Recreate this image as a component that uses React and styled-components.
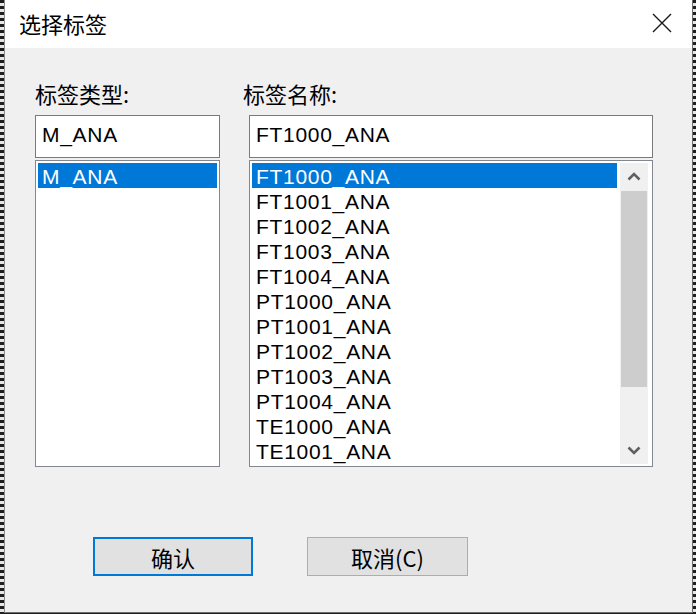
import React from "react";
import styled, { createGlobalStyle } from "styled-components";

const GlobalStyle = createGlobalStyle`
  * {
    box-sizing: border-box;
  }
  body {
    margin: 0;
    background: #f0f0f0;
  }
`;

const CJK = `"Noto Sans CJK SC", "Liberation Sans", sans-serif`;
const LATIN = `"Liberation Sans", "Noto Sans CJK SC", sans-serif`;

const Frame = styled.div`
  width: 696px;
  height: 614px;
  display: flex;
  padding: 0 3px 1px 4px;
  background: repeating-linear-gradient(
    to bottom,
    #1e1e1e 0 3px,
    #e6e6e6 3px 6px
  );
  overflow: hidden;
`;

const Window = styled.div`
  flex: 1;
  display: flex;
  flex-direction: column;
  background: #f0f0f0;
  border-left: 1px solid #8c8c8c;
  border-right: 1px solid #6e6e6e;
  border-bottom: 1px solid #6e6e6e;
`;

const TitleBar = styled.div`
  height: 48px;
  flex-shrink: 0;
  display: flex;
  align-items: center;
  justify-content: space-between;
  background: #ffffff;
  padding: 0 20px 2px 14px;
`;

const Title = styled.span`
  font-family: ${CJK};
  font-size: 22px;
  color: #000000;
`;

const CloseButton = styled.div`
  width: 20px;
  height: 20px;
  display: flex;
  align-items: center;
  justify-content: center;
`;

const Body = styled.div`
  flex: 1;
  display: flex;
  flex-direction: column;
  padding: 32px 0 0 30px;
`;

const Columns = styled.div`
  display: flex;
  gap: 29px;
`;

const Column = styled.div`
  width: ${(p) => p.$width}px;
  display: flex;
  flex-direction: column;
`;

const Label = styled.div`
  height: 26px;
  line-height: 26px;
  margin: 0 0 9px ${(p) => p.$shift || 0}px;
  font-family: ${CJK};
  font-size: 22px;
  color: #000000;
`;

const TextBox = styled.div`
  height: 43px;
  border: 1px solid #7a7a7a;
  background: #ffffff;
  padding: 0 0 3px 6px;
  display: flex;
  align-items: center;
  font-family: ${LATIN};
  font-size: 21px;
  letter-spacing: 0.7px;
  color: #000000;
`;

const ListBox = styled.div`
  margin-top: 2px;
  height: 307px;
  border: 1px solid #828790;
  background: #ffffff;
  padding: 2px;
  display: flex;
`;

const Items = styled.div`
  flex: 1;
  display: flex;
  flex-direction: column;
  overflow: hidden;
`;

const Item = styled.div`
  height: 25px;
  flex-shrink: 0;
  line-height: 25px;
  padding: 1px 0 0 4px;
  font-family: ${LATIN};
  font-size: 21px;
  letter-spacing: 0.7px;
  color: ${(p) => (p.$selected ? "#ffffff" : "#000000")};
  background: ${(p) => (p.$selected ? "#0078d7" : "transparent")};
  white-space: nowrap;
`;

const ScrollBar = styled.div`
  width: 28px;
  margin: 0 2px 0 3px;
  display: flex;
  flex-direction: column;
  background: #f0f0f0;
`;

const ScrollArrow = styled.div`
  height: 27px;
  flex-shrink: 0;
  display: flex;
  align-items: center;
  justify-content: center;
`;

const ScrollThumb = styled.div`
  height: 196px;
  flex-shrink: 0;
  margin: 1px 1px 0 1px;
  background: #cdcdcd;
`;

const ScrollTrack = styled.div`
  flex: 1;
`;

const Buttons = styled.div`
  display: flex;
  gap: 54px;
  margin-top: 70px;
  padding-left: 58px;
`;

const Button = styled.div`
  width: ${(p) => p.$width}px;
  height: 39px;
  display: flex;
  align-items: center;
  justify-content: center;
  background: #e1e1e1;
  border: ${(p) => (p.$focused ? "2px solid #0078d7" : "1px solid #adadad")};
  font-family: ${CJK};
  font-size: 22px;
  color: #000000;
`;

const Chevron = ({ down }) => (
  <svg width="14" height="9" viewBox="0 0 14 9">
    <path
      d={down ? "M1.5 1.5 L7 7 L12.5 1.5" : "M1.5 7.5 L7 2 L12.5 7.5"}
      fill="none"
      stroke="#606060"
      strokeWidth="2.6"
    />
  </svg>
);

const names = [
  "FT1000_ANA",
  "FT1001_ANA",
  "FT1002_ANA",
  "FT1003_ANA",
  "FT1004_ANA",
  "PT1000_ANA",
  "PT1001_ANA",
  "PT1002_ANA",
  "PT1003_ANA",
  "PT1004_ANA",
  "TE1000_ANA",
  "TE1001_ANA",
];

const App = () => {
  return (
    <Frame>
      <GlobalStyle />
      <Window>
        <TitleBar>
          <Title>选择标签</Title>
          <CloseButton>
            <svg width="20" height="20" viewBox="0 0 20 20">
              <path d="M1 1 L19 19 M19 1 L1 19" stroke="#1a1a1a" strokeWidth="1.4" />
            </svg>
          </CloseButton>
        </TitleBar>
        <Body>
          <Columns>
            <Column $width={185}>
              <Label>标签类型:</Label>
              <TextBox>M_ANA</TextBox>
              <ListBox>
                <Items>
                  <Item $selected>M_ANA</Item>
                </Items>
              </ListBox>
            </Column>
            <Column $width={404}>
              <Label $shift={-6}>标签名称:</Label>
              <TextBox>FT1000_ANA</TextBox>
              <ListBox>
                <Items>
                  {names.map((n, i) => (
                    <Item key={n} $selected={i === 0}>
                      {n}
                    </Item>
                  ))}
                </Items>
                <ScrollBar>
                  <ScrollArrow>
                    <Chevron />
                  </ScrollArrow>
                  <ScrollThumb />
                  <ScrollTrack />
                  <ScrollArrow>
                    <Chevron down />
                  </ScrollArrow>
                </ScrollBar>
              </ListBox>
            </Column>
          </Columns>
          <Buttons>
            <Button $width={160} $focused>
              确认
            </Button>
            <Button $width={161}>取消(C)</Button>
          </Buttons>
        </Body>
      </Window>
    </Frame>
  );
};

export default App;
